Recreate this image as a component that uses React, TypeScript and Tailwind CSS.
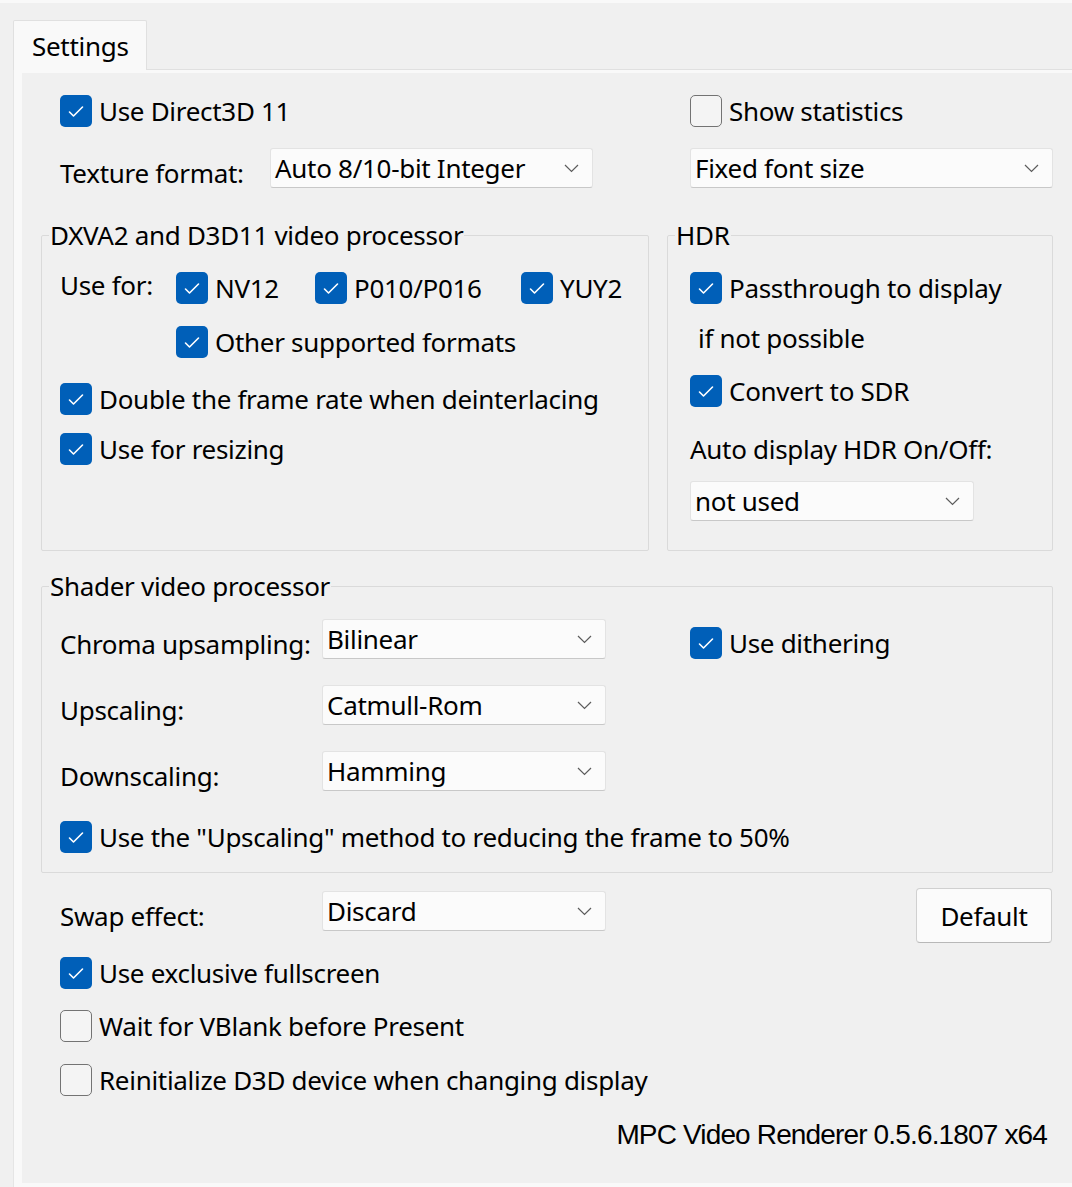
import type { ReactNode } from 'react';

// Check mark and chevron glyphs used by the dialog controls
const CheckGlyph = () => (
  <svg width="32" height="32" viewBox="0 0 32 32" fill="none">
    <path d="M9.5 17l4 4 9-9" stroke="#ffffff" strokeWidth="1.6" strokeLinecap="round" strokeLinejoin="round" />
  </svg>
);

const Chevron = () => (
  <svg width="15" height="9" viewBox="0 0 15 9" fill="none">
    <path d="M1 1l6.5 6.5L14 1" stroke="#5c5c5c" strokeWidth="1.2" />
  </svg>
);

const CheckBox = ({ checked, label, className = '' }: { checked?: boolean; label: string; className?: string }) => (
  <div className={`flex h-[32px] items-center gap-[7px] ${className}`}>
    {checked ? (
      <div className="flex h-[32px] w-[32px] shrink-0 items-center justify-center rounded-[5px] bg-[#005fb8]">
        <CheckGlyph />
      </div>
    ) : (
      <div className="h-[32px] w-[32px] shrink-0 rounded-[5px] border-[1.5px] border-[#737373] bg-[#f4f4f4]" />
    )}
    <span className="whitespace-nowrap">{label}</span>
  </div>
);

const Select = ({ value, className = '' }: { value: string; className?: string }) => (
  <div className={`flex h-[40px] shrink-0 items-center justify-between rounded-[3px] border border-[#e3e3e3] border-b-[#c8c8c8] bg-[#fbfbfb] pl-[4px] pr-[13px] ${className}`}>
    <span className="whitespace-nowrap">{value}</span>
    <Chevron />
  </div>
);

const Group = ({ title, className = '', bodyClass = '', children }: { title: string; className?: string; bodyClass?: string; children: ReactNode }) => (
  <fieldset className={`rounded-[2px] border border-[#dadada] ${className}`}>
    <legend className="ml-[7px] px-[1px] leading-[32px]">{title}</legend>
    <div className={bodyClass}>{children}</div>
  </fieldset>
);

// label + combo box on one line; label sits a few pixels lower than the box centre
const LabeledSelect = ({ label, value, labelWidth, selectWidth }: { label: string; value: string; labelWidth: string; selectWidth: string }) => (
  <div className="flex h-[40px] items-start">
    <span className={`mt-[9px] whitespace-nowrap ${labelWidth}`}>{label}</span>
    <Select value={value} className={selectWidth} />
  </div>
);

export default function App() {
  return (
    <div className="h-[1187px] w-[1072px] overflow-hidden bg-[#f0f0f0] font-['Noto_Sans',sans-serif] text-[26px] leading-[32px] tracking-[-0.3px] text-black">
      <div className="h-[3px] bg-[#f9f9f9]" />

      {/* tab strip */}
      <div className="flex h-[67px] items-end">
        <div className="ml-[13px] flex h-[50px] w-[134px] items-center rounded-t-[2px] border border-b-0 border-[#e0e0e0] bg-[#f9f9f9] pl-[18px]">
          Settings
        </div>
        <div className="h-full flex-1 border-b border-[#e0e0e0]" />
      </div>

      {/* tab page */}
      <div className="ml-[13px] border-l border-[#e5e5e5] bg-[#f9f9f9] pb-[4px] pl-[8px] pt-[3px]">
        <div className="h-[1110px] bg-[#f0f0f0] pl-[19px] pr-[19px] pt-[22px]">
          <div className="flex">
            <div className="w-[649px] pl-[19px]">
              <CheckBox checked label="Use Direct3D 11" />
            </div>
            <CheckBox label="Show statistics" />
          </div>

          <div className="mt-[21px] flex">
            <div className="w-[649px] pl-[19px]">
              <LabeledSelect label="Texture format:" value="Auto 8/10-bit Integer" labelWidth="w-[210px]" selectWidth="w-[323px]" />
            </div>
            <Select value="Fixed font size" className="w-[363px]" />
          </div>

          <div className="mt-[31px] flex gap-[18px]">
            <Group title="DXVA2 and D3D11 video processor" className="h-[332px] w-[608px]" bodyClass="pl-[18px]">
              <div className="mt-[21px] flex h-[32px] items-center">
                <span className="mb-[6px] w-[116px]">Use for:</span>
                <CheckBox checked label="NV12" className="w-[139px]" />
                <CheckBox checked label="P010/P016" className="w-[206px]" />
                <CheckBox checked label="YUY2" />
              </div>
              <CheckBox checked label="Other supported formats" className="mt-[22px] pl-[116px]" />
              <CheckBox checked label="Double the frame rate when deinterlacing" className="mt-[25px]" />
              <CheckBox checked label="Use for resizing" className="mt-[18px]" />
            </Group>

            <Group title="HDR" className="h-[332px] w-[386px]" bodyClass="pl-[22px]">
              <CheckBox checked label="Passthrough to display" className="mt-[21px]" />
              <div className="mt-[18px] pl-[8px]">if not possible</div>
              <CheckBox checked label="Convert to SDR" className="mt-[21px]" />
              <div className="mt-[26px]">Auto display HDR On/Off:</div>
              <Select value="not used" className="mt-[16px] w-[284px]" />
            </Group>
          </div>

          <Group title="Shader video processor" className="mt-[19px] h-[303px] w-[1012px]" bodyClass="pl-[18px]">
            <div className="mt-[17px] flex h-[40px] items-start">
              <LabeledSelect label="Chroma upsampling:" value="Bilinear" labelWidth="w-[262px]" selectWidth="w-[284px]" />
              <CheckBox checked label="Use dithering" className="ml-[84px] mt-[8px]" />
            </div>
            <div className="mt-[26px]">
              <LabeledSelect label="Upscaling:" value="Catmull-Rom" labelWidth="w-[262px]" selectWidth="w-[284px]" />
            </div>
            <div className="mt-[26px]">
              <LabeledSelect label="Downscaling:" value="Hamming" labelWidth="w-[262px]" selectWidth="w-[284px]" />
            </div>
            <CheckBox checked label={'Use the "Upscaling" method to reducing the frame to 50%'} className="mt-[30px]" />
          </Group>

          {/* swap effect and presentation options */}
          <div className="mt-[15px] flex h-[55px] items-start pl-[19px]">
            <div className="mt-[3px]">
              <LabeledSelect label="Swap effect:" value="Discard" labelWidth="w-[262px]" selectWidth="w-[284px]" />
            </div>
            <button
              type="button"
              className="ml-auto mr-[1px] h-[55px] w-[136px] rounded-[4px] border border-[#d0d0d0] border-b-[#b8b8b8] bg-[#fbfbfb]"
            >
              Default
            </button>
          </div>

          <div className="pl-[19px]">
            <CheckBox checked label="Use exclusive fullscreen" className="mt-[14px]" />
            <CheckBox label="Wait for VBlank before Present" className="mt-[21px]" />
            <CheckBox label="Reinitialize D3D device when changing display" className="mt-[22px]" />
          </div>

          <div className="mt-[23px] pr-[6px] text-right font-['Liberation_Sans',sans-serif] text-[28px] tracking-[-0.85px]">
            MPC Video Renderer 0.5.6.1807 x64
          </div>
        </div>
      </div>
    </div>
  );
}
